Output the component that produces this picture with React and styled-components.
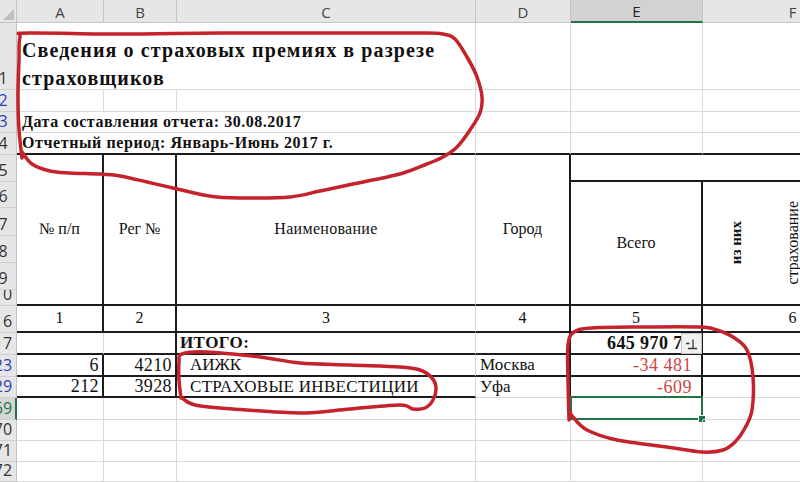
import React from 'react';
import styled, { createGlobalStyle } from 'styled-components';

const GlobalStyle = createGlobalStyle`
  html, body { margin: 0; padding: 0; background: #fff; overflow: hidden; }
  #root { width: 800px; height: 482px; }
`;

const GRID = '#d9d9d9';
const INK = '#1c1c1c';
const GREEN = '#217346';
const RED = '#c4232b';
const SERIF = '"Liberation Serif", "Times New Roman", serif';

const borderOf = (t) =>
  t === 't' ? `2px solid ${INK}` : t === 'n' ? 'none' : `1px solid ${GRID}`;

const Sheet = styled.div`
  position: relative;
  width: 800px;
  height: 482px;
  overflow: hidden;
  display: grid;
  grid-template-columns: 17px 87px 73px 299px 95px 132px 180px;
  grid-template-rows: 23px 67px 22px 21px 22px 27px 26px 28px 27px 27px 16px 27px 22px 22px 21px 22px 21px 21px 20px;
  font-family: ${SERIF};
  color: #111;
  background: #fff;
`;

const Corner = styled.div`
  grid-column: 1;
  grid-row: 1;
  position: relative;
  background: #e6e6e6;
  border-right: 1px solid #c4c4c4;
  border-bottom: 1px solid #c4c4c4;
  box-sizing: border-box;
  &::after {
    content: '';
    position: absolute;
    right: 2px;
    bottom: 2px;
    border-style: solid;
    border-width: 0 0 11px 11px;
    border-color: transparent transparent #bdbdbd transparent;
  }
`;

const ColHead = styled.div`
  grid-row: 1;
  grid-column: ${(p) => p.$c};
  box-sizing: border-box;
  display: flex;
  align-items: center;
  justify-content: center;
  background: ${(p) => (p.$active ? '#d2d2d2' : '#e6e6e6')};
  border-right: 1px solid #c4c4c4;
  border-bottom: ${(p) => (p.$active ? `2px solid ${GREEN}` : '1px solid #c4c4c4')};
  font-family: "Open Sans", "Liberation Sans", sans-serif;
  font-size: 15px;
  color: ${(p) => (p.$active ? '#222' : '#444')};
  padding-top: 1px;
`;

const RowHead = styled.div`
  grid-column: 1;
  grid-row: ${(p) => p.$r};
  box-sizing: border-box;
  display: flex;
  align-items: flex-end;
  overflow: hidden;
  background: ${(p) => (p.$state === 'selected' ? '#d6d6d6' : '#e6e6e6')};
  border-right: ${(p) => (p.$state === 'selected' ? `2px solid ${GREEN}` : '1px solid #c4c4c4')};
  border-bottom: 1px solid #cfcfcf;
  font-family: "Open Sans", "Liberation Sans", sans-serif;
  font-size: 16px;
  line-height: 1;
  padding-bottom: 3px;
  color: ${(p) =>
    p.$state === 'selected' ? GREEN : p.$state === 'filtered' ? '#2b3fb8' : '#333'};
  white-space: nowrap;
`;

const RowLabel = styled.span`
  flex: 0 0 34px;
  margin-left: -14px;
  text-align: center;
`;

const Cell = styled.div`
  grid-column: ${(p) => p.$c};
  grid-row: ${(p) => p.$r};
  position: relative;
  box-sizing: border-box;
  display: flex;
  align-items: ${(p) => p.$v || 'center'};
  justify-content: ${(p) => p.$h || 'flex-start'};
  border-right: ${(p) => borderOf(p.$br)};
  border-bottom: ${(p) => borderOf(p.$bb)};
  padding: ${(p) => p.$pad || '0 4px'};
  font-family: ${SERIF};
  font-size: ${(p) => p.$size || 17}px;
  font-weight: ${(p) => (p.$bold ? 700 : 400)};
  letter-spacing: ${(p) => p.$ls || 0}px;
  color: ${(p) => p.$color || '#111'};
  white-space: nowrap;
  line-height: 1.15;
`;

const Title = styled.div`
  font-size: 20px;
  font-weight: 700;
  line-height: 28px;
  letter-spacing: 1.1px;
`;

const VerticalGroup = styled.div`
  display: flex;
  align-items: center;
  gap: 39px;
  height: 100%;
`;

const VText = styled.span`
  writing-mode: vertical-rl;
  transform: rotate(180deg);
  font-size: ${(p) => p.$size || 16}px;
  font-weight: ${(p) => (p.$bold ? 700 : 400)};
  line-height: 18px;
`;

const Selection = styled.div`
  position: absolute;
  left: -1px;
  top: -2px;
  right: -1px;
  bottom: -1px;
  border: 2px solid ${GREEN};
  pointer-events: none;
`;

const Handle = styled.div`
  position: absolute;
  right: -5px;
  bottom: -5px;
  width: 6px;
  height: 6px;
  background: ${GREEN};
  border: 1px solid #fff;
`;

const SmartTag = styled.div`
  position: absolute;
  right: -1px;
  top: 0;
  width: 21px;
  height: 21px;
  box-sizing: border-box;
  background: #f0f0f0;
  border: 1px solid #c4c4c4;
  display: flex;
  align-items: center;
  justify-content: center;
`;

const Overlay = styled.svg`
  position: absolute;
  left: 0;
  top: 0;
  width: 800px;
  height: 482px;
  pointer-events: none;
`;

const smooth = (pts) => {
  let d = `M ${pts[0][0]} ${pts[0][1]}`;
  for (let i = 0; i < pts.length - 1; i++) {
    const p0 = pts[i - 1] || pts[i];
    const p1 = pts[i];
    const p2 = pts[i + 1];
    const p3 = pts[i + 2] || p2;
    const c1 = [p1[0] + (p2[0] - p0[0]) / 6, p1[1] + (p2[1] - p0[1]) / 6];
    const c2 = [p2[0] - (p3[0] - p1[0]) / 6, p2[1] - (p3[1] - p1[1]) / 6];
    d += ` C ${c1[0].toFixed(1)} ${c1[1].toFixed(1)} ${c2[0].toFixed(1)} ${c2[1].toFixed(1)} ${p2[0]} ${p2[1]}`;
  }
  return d;
};

const loop1 = [
  [22, 158], [19, 130], [18, 95], [19, 60], [20, 37], [28, 33], [120, 34], [220, 33], [330, 33],
  [420, 33], [443, 34], [455, 39], [467, 57], [477, 77], [482, 97], [480, 113], [470, 130],
  [457, 147], [443, 157], [427, 164], [400, 174], [353, 184], [320, 191], [290, 197], [250, 198],
  [217, 197], [190, 192], [173, 188], [147, 182], [120, 176], [100, 174], [70, 173], [50, 171],
  [32, 164], [22, 152],
];

const loop2 = [
  [181, 398], [179, 380], [179, 362], [182, 354], [207, 352], [260, 357], [300, 363], [350, 365],
  [400, 367], [420, 370], [432, 378], [436, 388], [433, 400], [425, 408], [413, 409], [400, 405],
  [350, 409], [300, 413], [233, 409], [195, 405], [182, 398],
];

const loop3 = [
  [569, 420], [568, 380], [568, 345], [574, 332], [592, 328], [643, 327], [700, 327], [717, 330],
  [733, 337], [747, 350], [753, 377], [752, 410], [745, 428], [735, 442], [723, 450], [702, 452],
  [667, 447], [617, 440], [587, 430], [573, 417], [569, 410],
];

const rowLabels = [
  ['1', 2], ['2', 3, 'filtered'], ['3', 4, 'filtered'], ['4', 5], ['5', 6], ['6', 7], ['7', 8],
  ['8', 9], ['9', 10], ['10', 11], ['16', 12], ['17', 13], ['23', 14, 'filtered'],
  ['29', 15, 'filtered'], ['69', 16, 'selected'], ['70', 17], ['71', 18], ['72', 19],
];

const cols = [['A', 2], ['B', 3], ['C', 4], ['D', 5], ['E', 6, true], ['F', 7]];

export default function App() {
  return (
    <>
      <GlobalStyle />
      <Sheet>
        <Corner />
        {cols.map(([l, c, a]) => (
          <ColHead key={l} $c={c} $active={a}>{l}</ColHead>
        ))}
        {rowLabels.map(([l, r, s]) => (
          <RowHead key={l} $r={r} $state={s}>
            <RowLabel>{l}</RowLabel>
          </RowHead>
        ))}

        {/* row 1 */}
        <Cell $c="2 / 5" $r={2} $v="flex-start" $pad="13px 0 0 5px">
          <Title>
            Сведения о страховых премиях в разрезе
            <br />
            страховщиков
          </Title>
        </Cell>
        <Cell $c={5} $r={2} />
        <Cell $c={6} $r={2} />
        <Cell $c={7} $r={2} />

        {/* row 2 */}
        <Cell $c={2} $r={3} />
        <Cell $c={3} $r={3} />
        <Cell $c={4} $r={3} />
        <Cell $c={5} $r={3} />
        <Cell $c={6} $r={3} />
        <Cell $c={7} $r={3} />

        {/* row 3 */}
        <Cell $c="2 / 5" $r={4} $bold $size={16} $ls={0.5} $pad="0 0 0 5px">
          Дата составления отчета: 30.08.2017
        </Cell>
        <Cell $c={5} $r={4} />
        <Cell $c={6} $r={4} />
        <Cell $c={7} $r={4} />

        {/* row 4 */}
        <Cell $c="2 / 5" $r={5} $bold $size={16} $ls={0.58} $pad="0 0 0 5px" $bb="t">
          Отчетный период: Январь-Июнь 2017 г.
        </Cell>
        <Cell $c={5} $r={5} $bb="t" />
        <Cell $c={6} $r={5} $bb="t" />
        <Cell $c={7} $r={5} $bb="t" />

        {/* header block */}
        <Cell $c={2} $r="6 / 12" $h="center" $size={16} $br="t" $bb="t">№ п/п</Cell>
        <Cell $c={3} $r="6 / 12" $h="center" $size={16} $br="t" $bb="t">Рег №</Cell>
        <Cell $c={4} $r="6 / 12" $h="center" $size={16} $ls={0.3} $bb="t">Наименование</Cell>
        <Cell $c={5} $r="6 / 12" $h="center" $size={16} $br="t" $bb="t">Город</Cell>
        <Cell $c="6 / 8" $r={6} $bb="t" />
        <Cell $c={6} $r="7 / 12" $h="center" $size={16} $br="t" $bb="t">Всего</Cell>
        <Cell $c={7} $r="7 / 12" $bb="t" $pad="0 0 0 24px">
          <VerticalGroup>
            <VText $bold $size={15}>из них</VText>
            <VText>страхование</VText>
          </VerticalGroup>
        </Cell>

        {/* row 16 */}
        <Cell $c={2} $r={12} $h="center" $size={16} $br="t" $bb="t">1</Cell>
        <Cell $c={3} $r={12} $h="center" $size={16} $br="t" $bb="t">2</Cell>
        <Cell $c={4} $r={12} $h="center" $size={16} $bb="t">3</Cell>
        <Cell $c={5} $r={12} $h="center" $size={16} $br="t" $bb="t">4</Cell>
        <Cell $c={6} $r={12} $h="center" $size={16} $br="t" $bb="t">5</Cell>
        <Cell $c={7} $r={12} $h="center" $size={16} $bb="t">6</Cell>

        {/* row 17 */}
        <Cell $c={2} $r={13} $bb="t" />
        <Cell $c={3} $r={13} $br="t" $bb="t" />
        <Cell $c={4} $r={13} $bold $pad="0 0 0 3px" $ls={0.4} $bb="t">ИТОГО:</Cell>
        <Cell $c={5} $r={13} $br="t" $bb="t" />
        <Cell $c={6} $r={13} $h="flex-end" $bold $size={18} $ls={0.4} $pad="0 9px 0 0" $br="t" $bb="t">
          645 970 78
          <SmartTag>
            <svg width="15" height="15" viewBox="0 0 15 15">
              <path d="M4 12.5 H13 M9 3.5 V12.5 M2 7.5 H5.5" stroke="#3a3a3a" strokeWidth="1.3" fill="none" />
            </svg>
          </SmartTag>
        </Cell>
        <Cell $c={7} $r={13} $bb="t" />

        {/* row 23 */}
        <Cell $c={2} $r={14} $h="flex-end" $size={18} $ls={0.4} $pad="0 3px 0 0" $br="t" $bb="t">6</Cell>
        <Cell $c={3} $r={14} $h="flex-end" $size={18} $ls={0.4} $pad="0 3px 0 0" $br="t" $bb="t">4210</Cell>
        <Cell $c={4} $r={14} $pad="0 0 0 13px" $bb="t">АИЖК</Cell>
        <Cell $c={5} $r={14} $pad="0 0 0 4px" $br="t" $bb="t">Москва</Cell>
        <Cell $c={6} $r={14} $h="flex-end" $size={18} $ls={0.5} $pad="0 9px 0 0" $color="#cc4646" $br="t" $bb="t">-34 481</Cell>
        <Cell $c={7} $r={14} $bb="t" />

        {/* row 29 */}
        <Cell $c={2} $r={15} $h="flex-end" $size={18} $ls={0.4} $pad="0 3px 0 0" $br="t" $bb="t">212</Cell>
        <Cell $c={3} $r={15} $h="flex-end" $size={18} $ls={0.4} $pad="0 3px 0 0" $br="t" $bb="t">3928</Cell>
        <Cell $c={4} $r={15} $pad="0 0 0 13px" $ls={0.3} $bb="t">СТРАХОВЫЕ ИНВЕСТИЦИИ</Cell>
        <Cell $c={5} $r={15} $pad="0 0 0 4px" $br="t">Уфа</Cell>
        <Cell $c={6} $r={15} $h="flex-end" $size={18} $ls={0.5} $pad="0 9px 0 0" $color="#cc4646" $br="t">-609</Cell>
        <Cell $c={7} $r={15} />

        {/* empty rows */}
        {[16, 17, 18, 19].map((r) =>
          [2, 3, 4, 5, 6, 7].map((c) => (
            <Cell key={`${r}-${c}`} $c={c} $r={r}>
              {r === 16 && c === 6 && (
                <Selection>
                  <Handle />
                </Selection>
              )}
            </Cell>
          ))
        )}

        <Overlay viewBox="0 0 800 482">
          <g stroke={RED} strokeWidth="3.5" fill="none" strokeLinecap="round" strokeLinejoin="round">
            <path d={smooth(loop1)} />
            <path d={smooth(loop2)} />
            <path d={smooth(loop3)} />
          </g>
        </Overlay>
      </Sheet>
    </>
  );
}
